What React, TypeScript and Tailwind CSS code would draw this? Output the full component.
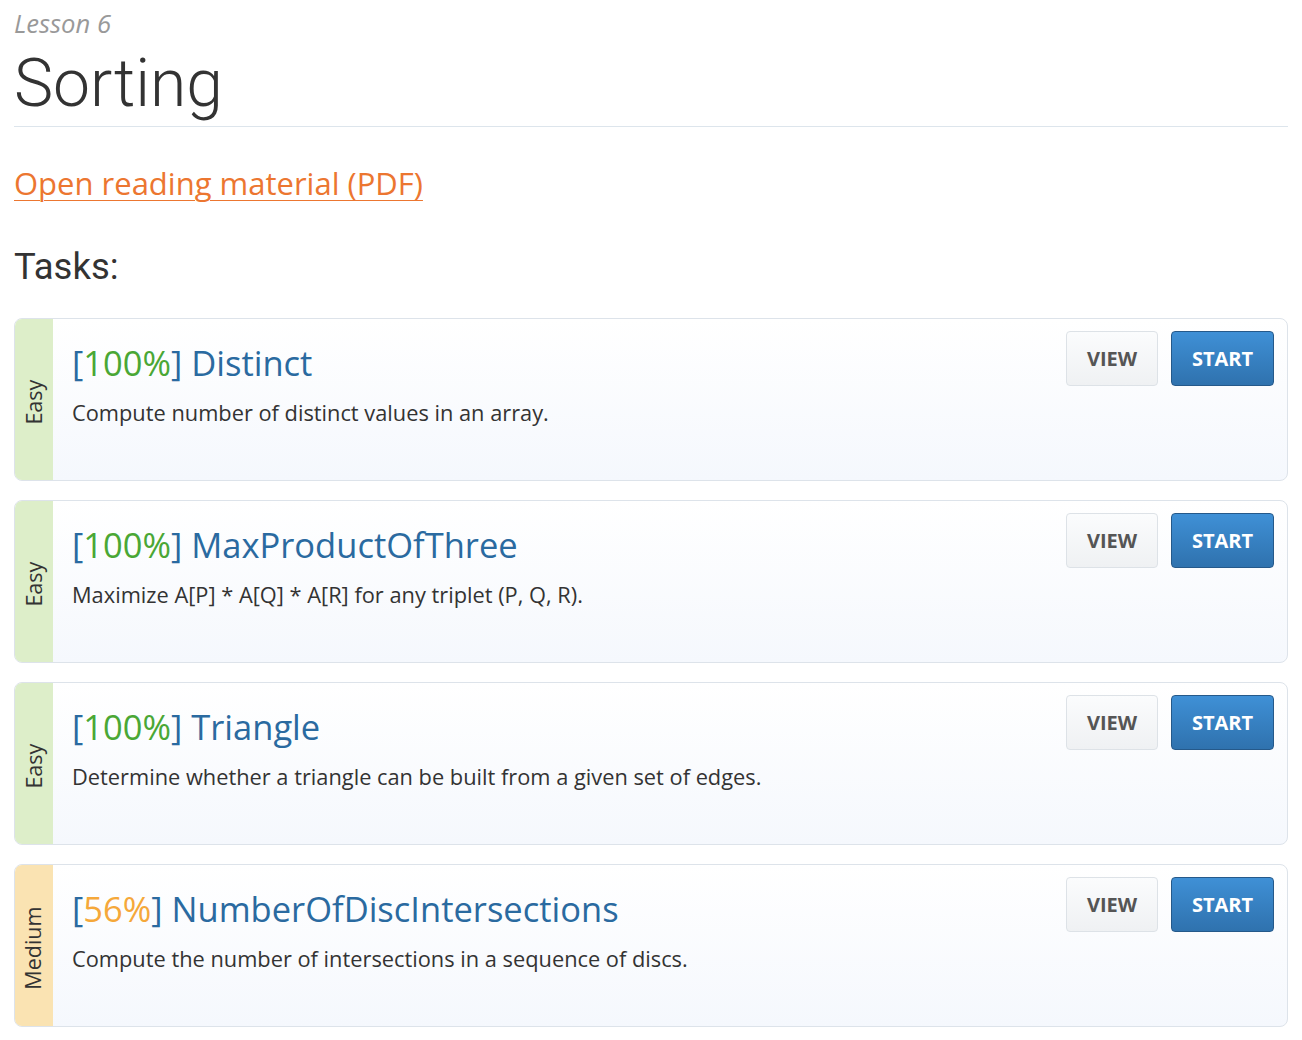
const tasks = [
  { level: "Easy", score: "100%", name: "Distinct", desc: "Compute number of distinct values in an array." },
  { level: "Easy", score: "100%", name: "MaxProductOfThree", desc: "Maximize A[P] * A[Q] * A[R] for any triplet (P, Q, R)." },
  { level: "Easy", score: "100%", name: "Triangle", desc: "Determine whether a triangle can be built from a given set of edges." },
  { level: "Medium", score: "56%", name: "NumberOfDiscIntersections", desc: "Compute the number of intersections in a sequence of discs." },
];

function TaskCard({ task }: { task: (typeof tasks)[number] }) {
  const easy = task.level === "Easy";
  return (
    <div className="flex h-[163px] rounded-[8px] border border-[#dde3ea] bg-gradient-to-b from-white to-[#f5f8fd] overflow-hidden">
      <div className={`w-[38px] shrink-0 flex items-center justify-center pt-[6px] ${easy ? "bg-[#ddeec9]" : "bg-[#fae3b2]"}`}>
        <span className="-rotate-90 whitespace-nowrap text-[21.5px] text-[#333]">{task.level}</span>
      </div>
      <div className="flex-1 flex pl-[19px] pr-[13px] pt-[12px]">
        <div className="flex-1 pt-[12px]">
          <h3 className="text-[34.5px] leading-[40px] text-[#2a6aa0]">
            [<span className={easy ? "text-[#4aa735]" : "text-[#f5a83a]"}>{task.score}</span>] {task.name}
          </h3>
          <p className="mt-[15px] text-[21.8px] leading-[30px] text-[#333]">{task.desc}</p>
        </div>
        <div className="flex gap-[13px] items-start">
          <button className="h-[55px] w-[92px] rounded-[4px] border border-[#dde2e7] bg-gradient-to-b from-[#fbfcfd] to-[#eff1f3] text-[20px] font-bold text-[#555]">
            VIEW
          </button>
          <button className="h-[55px] w-[103px] rounded-[4px] border border-[#25598a] bg-gradient-to-b from-[#3f90d6] to-[#2f72ae] text-[20px] font-bold text-white">
            START
          </button>
        </div>
      </div>
    </div>
  );
}

export default function App() {
  return (
    <div className="min-h-screen bg-white px-[14px] pt-[8px] font-['Open_Sans',sans-serif]">
      <div className="italic text-[25.6px] leading-[32px] text-[#999]">Lesson 6</div>
      <h1 className="mt-[4px] font-['Roboto',sans-serif] font-light text-[66px] leading-[80px] text-[#333]">Sorting</h1>
      <div className="mt-[2px] border-t border-[#dde5ec]"></div>
      <a href="#" className="mt-[36px] inline-block text-[31px] leading-[40px] text-[#ec7630] underline underline-offset-[5px] decoration-1">
        Open reading material (PDF)
      </a>
      <h2 className="mt-[42px] font-['Roboto',sans-serif] text-[36.5px] leading-[44px] text-[#333]">Tasks:</h2>
      <div className="mt-[29px] flex flex-col gap-[19px]">
        {tasks.map((t) => (
          <TaskCard key={t.name} task={t} />
        ))}
      </div>
    </div>
  );
}
